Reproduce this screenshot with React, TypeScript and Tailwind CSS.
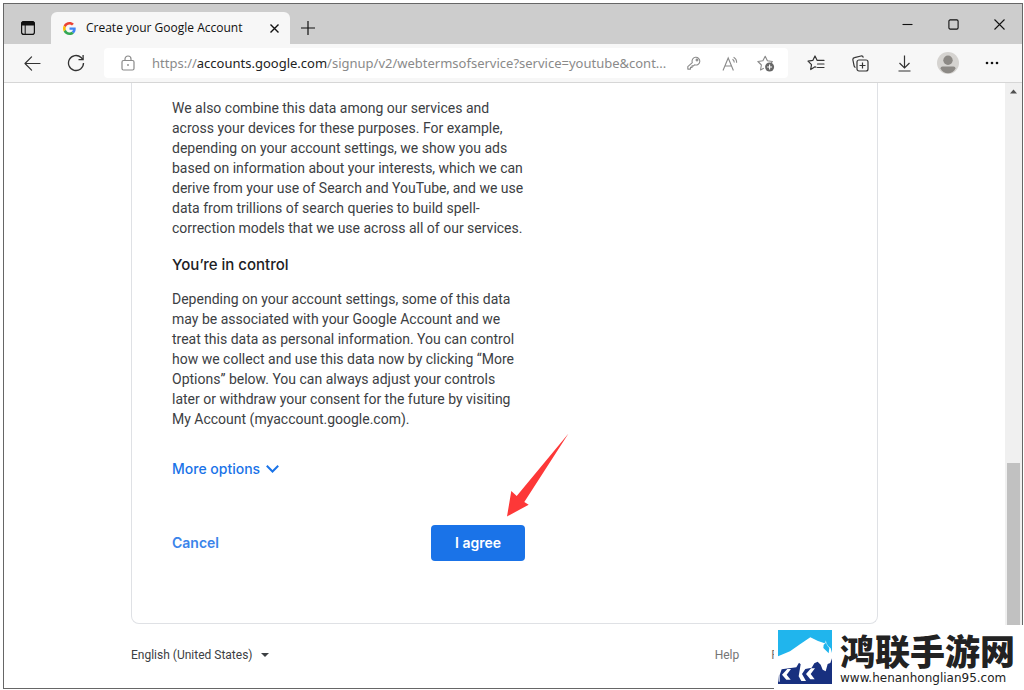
import { useState, type ReactNode } from "react";

const PAGE_URL = {
  scheme: "https://",
  host: "accounts.google.com",
  path: "/signup/v2/webtermsofservice?service=youtube&cont...",
};

export default function App() {
  return (
    <div className="relative h-screen overflow-hidden bg-white pt-[3px] pr-px pb-px pl-[3px] font-['Roboto',sans-serif]">
      <div className="flex h-full flex-col border border-[#666] bg-white">
        <TitleBar />
        <Toolbar />
        <div className="flex min-h-0 flex-1">
          <TermsPage />
          <Scrollbar />
        </div>
      </div>
      <Watermark />
    </div>
  );
}

function TitleBar() {
  return (
    <header className="flex h-10 shrink-0 items-end bg-[#cdcdcd] text-[#111]">
      <button aria-label="Tab actions" className="grid h-8 w-[47px] place-items-center">
        <svg width="14" height="14" viewBox="0 0 14 14" fill="none" stroke="currentColor">
          <rect x="0.6" y="0.6" width="12.8" height="12.8" rx="2.2" strokeWidth="1.2" />
          <path d="M0.6 4V2.6a2 2 0 0 1 2-2h8.8a2 2 0 0 1 2 2V4z" fill="currentColor" />
          <path d="M4.2 4v9" />
        </svg>
      </button>
      <div className="flex h-8 w-[239px] items-center rounded-t-md bg-[#f7f7f7] pr-2 pl-3">
        <GoogleLogo />
        <span className="ml-2.5 flex-1 font-['Open_Sans',sans-serif] text-[12px] leading-4 whitespace-nowrap">
          Create your Google Account
        </span>
        <button aria-label="Close tab" className="grid h-5 w-4 place-items-center">
          <svg width="9" height="9" viewBox="0 0 9 9" stroke="currentColor" strokeWidth="1.4">
            <path d="M0.5 0.5l8 8M8.5 0.5l-8 8" />
          </svg>
        </button>
      </div>
      <button aria-label="New tab" className="grid h-8 w-[35px] place-items-center">
        <svg width="14" height="14" viewBox="0 0 14 14" stroke="currentColor" strokeWidth="1.2">
          <path d="M7 0v14M0 7h14" />
        </svg>
      </button>
      <div className="flex h-full flex-1 justify-end">
        <WindowButton label="Minimize">
          <path d="M0.5 5.5h10" />
        </WindowButton>
        <WindowButton label="Maximize">
          <rect x="0.9" y="0.9" width="9.2" height="9.2" rx="1.3" />
        </WindowButton>
        <WindowButton label="Close">
          <path d="M0.5 0.5l10 10M10.5 0.5l-10 10" />
        </WindowButton>
      </div>
    </header>
  );
}

function WindowButton({ label, children }: { label: string; children: ReactNode }) {
  return (
    <button aria-label={label} className="grid h-10 w-[46px] place-items-center">
      <svg width="11" height="11" viewBox="0 0 11 11" fill="none" stroke="currentColor" strokeWidth="1.1">
        {children}
      </svg>
    </button>
  );
}

function ToolButton({ label, children }: { label: string; children: ReactNode }) {
  return (
    <button aria-label={label} className="grid h-8 w-11 place-items-center text-[#333]">
      {children}
    </button>
  );
}

function Toolbar() {
  const [editing, setEditing] = useState(false);

  return (
    <nav className="flex h-[39px] shrink-0 items-center border-b border-[#d6d6d6] bg-[#f7f7f7] pr-2 pl-1.5">
      <ToolButton label="Back">
        <svg width="17" height="15" viewBox="0 0 18 16" fill="none" stroke="currentColor" strokeWidth="1.3">
          <path d="M8 1L1 8l7 7M1 8h16" strokeLinecap="round" strokeLinejoin="round" />
        </svg>
      </ToolButton>
      <ToolButton label="Refresh">
        <svg width="18" height="18" viewBox="0 0 18 18" fill="none" stroke="currentColor" strokeWidth="1.3">
          <path d="M16.5 9a7.5 7.5 0 1 1-2.4-5.500L16 5.500" />
          <path d="M16.1 1v4.600h-4.600" />
        </svg>
      </ToolButton>

      <div className="ml-1.5 flex h-[30px] min-w-0 flex-1 items-center rounded bg-white text-[#8a8a8a]">
        <button aria-label="View site information" className="grid h-7 w-12 shrink-0 place-items-center">
          <svg width="14" height="16" viewBox="0 0 14 16" fill="none" stroke="currentColor" strokeWidth="1.2">
            <rect x="1" y="5.5" width="12" height="9.5" rx="1.5" />
            <path d="M4 5.5V4a3 3 0 0 1 6 0v1.5" />
            <circle cx="7" cy="10" r="0.9" fill="currentColor" stroke="none" />
          </svg>
        </button>
        <div className="relative flex min-w-0 flex-1 items-center font-['Noto_Sans',sans-serif] text-[13px] leading-5">
          <input
            aria-label="Address and search bar"
            className="h-7 w-full bg-transparent outline-none"
            value={editing ? PAGE_URL.scheme + PAGE_URL.host + PAGE_URL.path : ""}
            onFocus={() => setEditing(true)}
            onBlur={() => setEditing(false)}
            readOnly
          />
          {!editing && (
            <span className="pointer-events-none absolute left-0 whitespace-nowrap">
              {PAGE_URL.scheme}
              <span className="text-[#222]">{PAGE_URL.host}</span>
              {PAGE_URL.path}
            </span>
          )}
        </div>
        <div className="flex shrink-0 pr-1">
          <button aria-label="Saved passwords" className="grid h-7 w-9 place-items-center">
            <svg width="14" height="14" viewBox="0 0 14 14" fill="none" stroke="currentColor" strokeWidth="1.1">
              <path d="M5.3 6.600a3.900 3.900 0 1 1 2.300 2.200L6.500 9.900H5v1.500H3.500v1.700H0.800v-2.400z" strokeLinejoin="round" />
              <circle cx="10" cy="4" r="0.9" />
            </svg>
          </button>
          <button aria-label="Read aloud" className="grid h-7 w-9 place-items-center">
            <svg width="17" height="15" viewBox="0 0 17 15" fill="none" stroke="currentColor" strokeWidth="1.1">
              <path d="M1 14.5L6.200 2l5.200 12.500M2.800 10h6.800" />
              <path d="M10.5 3.200a4 4 0 0 1 1.800 3.200M11.600 1.200a6 6 0 0 1 3 5.600" />
            </svg>
          </button>
          <button aria-label="Add to favorites" className="grid h-7 w-9 place-items-center">
            <svg width="18" height="17" viewBox="0 0 18 17" fill="none" stroke="currentColor" strokeWidth="1.1">
              <path d="M6.8 13.200L3.500 15l.9-5L0.900 6.500l5-.7L8.200 1.200l2.200 4.600 5 .7-1.300 1.300" strokeLinejoin="round" />
              <circle cx="12.6" cy="12" r="4.5" fill="#666" stroke="none" />
              <path d="M12.6 9.500v5M10.100 12h5" stroke="#fff" />
            </svg>
          </button>
        </div>
      </div>

      <div className="ml-1.5 flex shrink-0">
        <ToolButton label="Favorites">
          <svg width="18" height="16" viewBox="0 0 18 16" fill="none" stroke="currentColor" strokeWidth="1.2">
            <path d="M9 12.300l-1-.5L3.700 14.500l.8-4.900L1 6.100l4.800-.7L8 1l2.200 4.400H17M10.500 9H17M10.500 12.500H17" strokeLinejoin="round" strokeLinecap="round" />
          </svg>
        </ToolButton>
        <ToolButton label="Collections">
          <svg width="17" height="17" viewBox="0 0 17 17" fill="none" stroke="currentColor" strokeWidth="1.2">
            <rect x="5" y="5" width="11" height="11" rx="2" />
            <path d="M10.5 7.500v6M7.500 10.500h6" />
            <path d="M3.5 12.500a2 2 0 0 1-1.400-1.600L0.900 5a2 2 0 0 1 1.600-2.300L9 1a2 2 0 0 1 2.300 1.600" />
          </svg>
        </ToolButton>
        <ToolButton label="Downloads">
          <svg width="13" height="17" viewBox="0 0 13 17" fill="none" stroke="currentColor" strokeWidth="1.2">
            <path d="M6.5 0.500v12M1.500 8l5 5 5-5M0.500 16h12" />
          </svg>
        </ToolButton>
        <ToolButton label="Profile">
          <svg width="22" height="22" viewBox="0 0 22 22" fill="#8c8985">
            <circle cx="11" cy="11" r="11" fill="#d5d3d0" />
            <circle cx="11" cy="8.3" r="4.7" />
            <path d="M3.5 16.500a2 2 0 0 1 2-2h11a2 2 0 0 1 2 2c-1.300 3-4.200 4.800-7.500 4.800s-6.200-1.800-7.500-4.800z" />
          </svg>
        </ToolButton>
        <ToolButton label="Settings and more">
          <svg width="14" height="4" viewBox="0 0 14 4" fill="#111">
            <circle cx="2" cy="2" r="1.3" />
            <circle cx="7" cy="2" r="1.3" />
            <circle cx="12" cy="2" r="1.3" />
          </svg>
        </ToolButton>
      </div>
    </nav>
  );
}

function TermsPage() {
  return (
    <main className="min-w-0 flex-1 overflow-hidden text-[14px] leading-5 text-[#3c4043]">
      <div className="mx-auto max-w-[747px]">
        <section className="rounded-b-lg border-x border-b border-[#dfe1e5] px-10 pt-[15px] pb-[62px]">
          <div className="max-w-[353px]">
            <p>
              We also combine this data among our services and across your devices for these purposes. For
              example, depending on your account settings, we show you ads based on information about your
              interests, which we can derive from your use of Search and YouTube, and we use data from
              trillions of search queries to build spell-correction models that we use across all of our
              services.
            </p>
            <h2 className="mt-[15px] mb-3 font-['Inter',sans-serif] text-[15px] leading-6 font-medium text-[#202124]">
              You’re in control
            </h2>
            <p>
              Depending on your account settings, some of this data may be associated with your Google Account
              and we treat this data as personal information. You can control how we collect and use this data
              now by clicking “More Options” below. You can always adjust your controls later or withdraw your
              consent for the future by visiting My Account (myaccount.google.com).
            </p>
            <button className="mt-[30px] flex items-center gap-1.5 font-['Inter',sans-serif] font-medium text-[#1a73e8]">
              More options
              <svg width="13" height="8" viewBox="0 0 13 8" fill="none" stroke="currentColor" strokeWidth="2">
                <path d="M0.8 0.800l5.700 5.700 5.700-5.700" />
              </svg>
            </button>
            <div className="mt-[46px] flex items-center justify-between font-['Inter',sans-serif] font-semibold">
              <button className="text-[#3a84ea]">Cancel</button>
              <div className="relative">
                <button className="h-9 w-[94px] rounded bg-[#1a73e8] text-white">I agree</button>
                <svg className="absolute bottom-11 left-[76px]" width="62" height="84" viewBox="0 0 62 84" fill="#fd3838">
                  <path d="M0 83.500L4.300 58l5.400 5L61.500 0.500 17.300 69l4.400 2.700z" />
                </svg>
              </div>
            </div>
          </div>
        </section>

        <footer className="flex items-center justify-between py-[21px] text-[12px]">
          <label className="flex items-center gap-2">
            <select aria-label="Language" className="appearance-none bg-transparent outline-none">
              <option>English (United States)</option>
            </select>
            <svg width="8" height="4" viewBox="0 0 8 4" fill="currentColor">
              <path d="M0 0h8L4 4z" />
            </svg>
          </label>
          <div className="flex gap-8 pr-[68px] text-[#757575]">
            <a href="#help">Help</a>
            <a href="#privacy">Privacy</a>
          </div>
        </footer>
      </div>
    </main>
  );
}

function Scrollbar() {
  return (
    <div className="flex w-[17px] shrink-0 flex-col items-center bg-[#f0f0f0]">
      <svg className="my-1.5 shrink-0" width="7" height="5" viewBox="0 0 7 5" fill="#505050">
        <path d="M3.5 0.500L7 4.500H0z" />
      </svg>
      <div className="w-[13px] basis-[60%]" />
      <div className="w-[13px] flex-1 bg-[#c1c1c1]" />
    </div>
  );
}

function Watermark() {
  return (
    <aside className="absolute right-0 bottom-0 flex h-[65px] w-[250px] gap-2 bg-white pt-[5px] pl-1 text-[#222]">
      <svg className="shrink-0" width="54" height="54" viewBox="0 0 162 162">
        <path d="M0 0h162v90H0z" fill="#20b5ed" />
        <path d="M0 84h162v78H0z" fill="#18307f" />
        <path
          d="M0 79L36 64 66 43 97 22l23 11 20 7 3-9 6 16 9 8 4 14v16l-5 14-8 3-6 22-9-5-6-15-9-9-10 5-8 13-19 4-10 15 12 21H70l-8-14 6-36-5-5-8 14-44 6-6 17v20H2l-2-20z"
          fill="#fff"
        />
        <path d="M142 28c5 8 2 14 6 19l6 7-2 16-9-9-7-7 1-10 6-5z" fill="#20b5ed" />
        <path d="M12 134l16-17h11L26 134l12 15H25zM84 132l15-17h12L98 132l12 16H97z" fill="#fff" />
      </svg>
      <div className="flex flex-col">
        <strong className="font-['Noto_Sans_CJK_SC',sans-serif] text-[35px] leading-10 font-black whitespace-nowrap">
          鸿联手游网
        </strong>
        <span className="font-['DejaVu_Sans',sans-serif] text-[12px] leading-4">www.henanhonglian95.com</span>
      </div>
    </aside>
  );
}

function GoogleLogo() {
  return (
    <svg width="13" height="13" viewBox="0 0 48 48" className="shrink-0">
      <path fill="#EA4335" d="M24 9.500c3.540 0 6.710 1.220 9.210 3.600l6.850-6.850C35.900 2.380 30.470 0 24 0 14.620 0 6.510 5.380 2.560 13.220l7.980 6.190C12.430 13.720 17.740 9.500 24 9.500z" />
      <path fill="#4285F4" d="M46.980 24.550c0-1.570-.15-3.090-.38-4.550H24v9.020h12.940c-.58 2.960-2.260 5.480-4.780 7.180l7.730 6c4.510-4.180 7.090-10.360 7.090-17.650z" />
      <path fill="#FBBC05" d="M10.530 28.590c-.48-1.450-.76-2.990-.76-4.590s.27-3.140.76-4.590l-7.980-6.190C.92 16.460 0 20.120 0 24c0 3.880.92 7.540 2.560 10.780l7.970-6.190z" />
      <path fill="#34A853" d="M24 48c6.480 0 11.930-2.130 15.890-5.810l-7.730-6c-2.150 1.450-4.920 2.300-8.160 2.300-6.260 0-11.570-4.220-13.470-9.910l-7.980 6.190C6.510 42.620 14.620 48 24 48z" />
    </svg>
  );
}
